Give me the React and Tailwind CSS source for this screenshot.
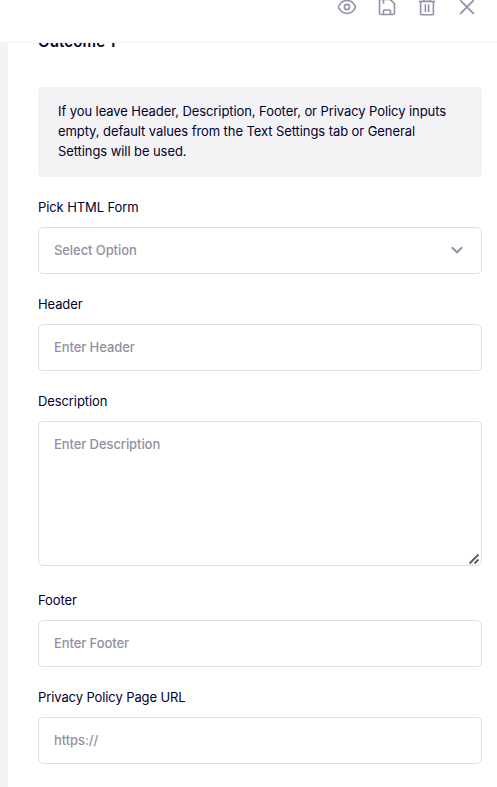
import React from 'react';

const EyeIcon = () => (
  <svg width="20" height="20" viewBox="0 0 20 20" fill="none" stroke="currentColor" strokeWidth="1.6">
    <path d="M10 3.5c4.2 0 6.7 2.7 8.1 5.3.4.8.4 1.6 0 2.4-1.4 2.6-3.9 5.3-8.1 5.3s-6.7-2.7-8.1-5.3c-.4-.8-.4-1.6 0-2.4 1.4-2.6 3.9-5.3 8.1-5.3z" />
    <circle cx="10" cy="10" r="2.6" />
  </svg>
);

const SaveIcon = () => (
  <svg width="20" height="20" viewBox="0 0 20 20" fill="none" stroke="currentColor" strokeWidth="1.6" strokeLinejoin="round">
    <path d="M4.2 2.5h9l4.3 4.2v9.3a1.5 1.5 0 0 1-1.5 1.5H4a1.5 1.5 0 0 1-1.5-1.5V4.2a1.7 1.7 0 0 1 1.7-1.7z" />
    <path d="M6.5 2.5v4.2" />
    <path d="M6.5 17.5v-3.6a.9.9 0 0 1 .9-.9h5.2a.9.9 0 0 1 .9.9v3.6" />
  </svg>
);

const TrashIcon = () => (
  <svg width="20" height="20" viewBox="0 0 20 20" fill="none" stroke="currentColor" strokeWidth="1.6" strokeLinejoin="round">
    <path d="M2 4.5h16" />
    <path d="M6.7 4V2.4h6.6V4" />
    <path d="M3.6 4.5v12.3a1 1 0 0 0 1 1h10.8a1 1 0 0 0 1-1V4.5" />
    <path d="M8.4 7.2v7.8M11.6 7.2v7.8" />
  </svg>
);

const CloseIcon = () => (
  <svg width="20" height="20" viewBox="0 0 20 20" fill="none" stroke="currentColor" strokeWidth="1.8">
    <path d="M3.2 3.2l13.6 13.6M16.8 3.2L3.2 16.8" />
  </svg>
);

const inputClass =
  'block w-full rounded-[5px] border border-[#dedee5] bg-white px-[15px] text-[13px] font-medium tracking-[-0.08px] text-[#02003a] placeholder:text-[#9290a2] placeholder:opacity-100 outline-none';

const Field = ({ label, children }) => (
  <label className="flex flex-col gap-2.5">
    <span className="text-[13px] leading-5 tracking-[-0.1px]">{label}</span>
    {children}
  </label>
);

const App = () => {
  return (
    <div className="flex h-[787px] w-[497px] flex-col overflow-hidden bg-white font-['Inter','Liberation_Sans',sans-serif] text-[#02002c]">
      {/* Toolbar */}
      <header className="flex h-[43px] shrink-0 items-start justify-end border-b border-[#f3f3f5] pr-5">
        <div className="-mt-[3px] flex gap-5 text-[#9290a8]">
          <button aria-label="Preview"><EyeIcon /></button>
          <button aria-label="Save"><SaveIcon /></button>
          <button aria-label="Delete"><TrashIcon /></button>
          <button aria-label="Close"><CloseIcon /></button>
        </div>
      </header>

      <div className="flex min-h-0 flex-1">
        <div className="w-2 shrink-0 bg-[#f3f3f5]" />

        {/* Scrolled settings panel */}
        <main className="flex-1 overflow-hidden pl-[30px] pr-[15px]">
          <h2 className="-mt-[11px] text-[15px] font-semibold leading-5 tracking-[0.15px]">Outcome 1</h2>

          <div className="mt-[35px] rounded-[5px] bg-[#f3f3f6] px-5 pb-4 pt-3.5 text-[13px] leading-5 tracking-[-0.08px]">
            If you leave Header, Description, Footer, or Privacy Policy inputs empty, default values from the Text Settings tab or General Settings will be used.
          </div>

          <div className="mt-5 flex flex-col gap-5">
            <Field label="Pick HTML Form">
              <button className="flex h-[47px] w-full items-center justify-between rounded-[5px] border border-[#dedee5] px-[15px] text-left text-[13px] font-medium tracking-[-0.08px] text-[#9290a2]">
                Select Option
                <svg className="-mt-0.5" width="18" height="18" viewBox="0 0 18 18" fill="none" stroke="#9290a8" strokeWidth="2">
                  <path d="M3.8 6.2L9 11.3l5.2-5.1" />
                </svg>
              </button>
            </Field>

            <Field label="Header">
              <input className={`${inputClass} h-[47px] pb-0.5`} placeholder="Enter Header" />
            </Field>

            <Field label="Description">
              <div className="relative mb-1">
                <textarea className={`${inputClass} h-[145px] resize-none py-3 leading-5`} placeholder="Enter Description" />
                {/* Resize grip */}
                <svg className="absolute bottom-px right-0.5" width="12" height="12" viewBox="0 0 12 12" fill="none" stroke="#5b5b60" strokeWidth="1.8">
                  <path d="M1.5 10.5l9-9M6.5 10.5l4-4" />
                </svg>
              </div>
            </Field>

            <Field label="Footer">
              <input className={`${inputClass} h-[47px] pb-0.5`} placeholder="Enter Footer" />
            </Field>

            <Field label="Privacy Policy Page URL">
              <input className={`${inputClass} h-[47px] pb-0.5`} placeholder="https://" />
            </Field>
          </div>
        </main>
      </div>
    </div>
  );
};

export default App;
